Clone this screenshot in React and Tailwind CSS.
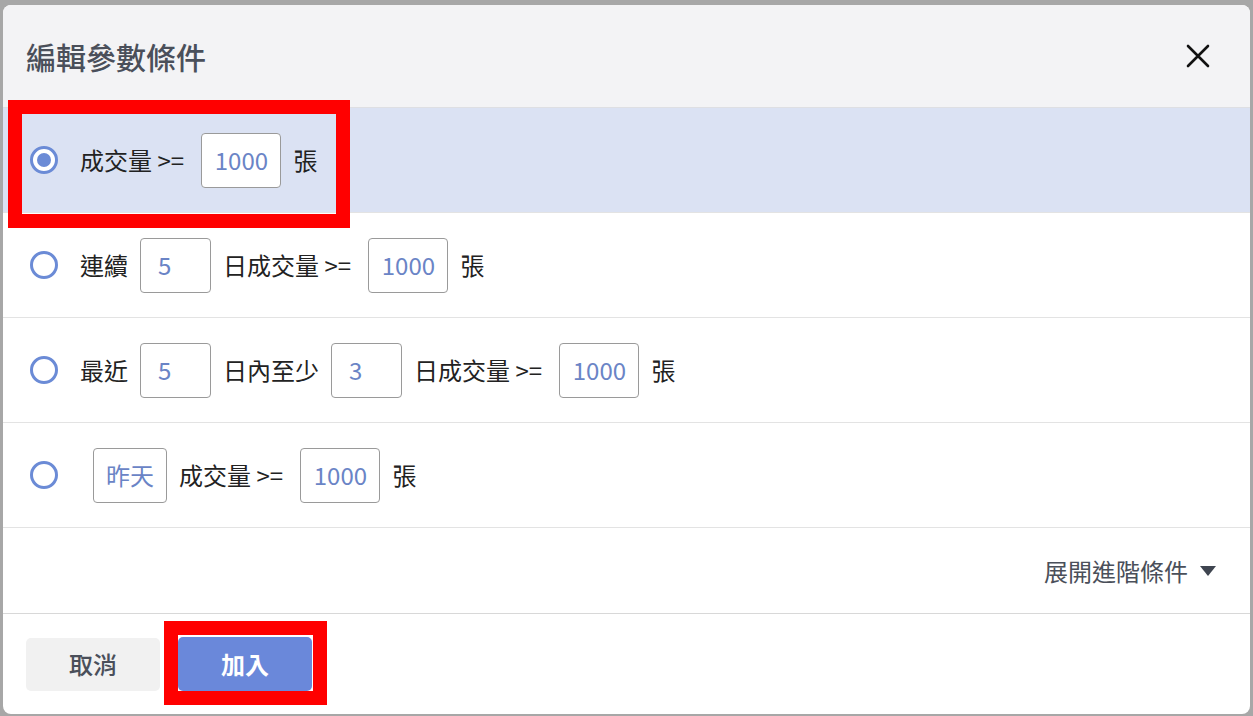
import React, { useState } from 'react';

const font = { fontFamily: '"Noto Sans CJK TC", "Noto Sans", sans-serif' };

const Radio = ({ checked }) => (
  <span className="w-[28px] h-[28px] rounded-full border-[3px] border-[#6b8bd6] flex items-center justify-center shrink-0 bg-white">
    {checked && <span className="w-[14px] h-[14px] rounded-full bg-[#6b8bd6]" />}
  </span>
);

const Box = ({ value, wide }) => (
  <span
    className={`${wide ? 'w-[80px] justify-center' : 'w-[71px] px-[17px]'} h-[55px] shrink-0 bg-white border border-[#9a9a9a] rounded-[4px] flex items-center text-[24px] text-[#6a84c6]`}
  >
    {value}
  </span>
);

const Label = ({ children }) => (
  <span className="text-[24px] text-[#222] whitespace-pre">{children}</span>
);

const App = () => {
  const [selected, setSelected] = useState(0);

  const rows = [
    [<Label key="a">成交量 &gt;= </Label>, <Box key="b" value="1000" wide />, <Label key="c">張</Label>],
    [
      <Label key="a">連續</Label>, <Box key="b" value="5" />,
      <Label key="c">日成交量 &gt;= </Label>, <Box key="d" value="1000" wide />, <Label key="e">張</Label>,
    ],
    [
      <Label key="a">最近</Label>, <Box key="b" value="5" />,
      <Label key="c">日內至少</Label>, <Box key="d" value="3" />,
      <Label key="e">日成交量 &gt;= </Label>, <Box key="f" value="1000" wide />, <Label key="g">張</Label>,
    ],
    [
      <span key="s" className="ml-[13px] w-[74px] h-[55px] shrink-0 bg-white border border-[#9a9a9a] rounded-[4px] flex items-center justify-center text-[24px] text-[#6a84c6]">昨天</span>,
      <Label key="a">成交量 &gt;= </Label>, <Box key="b" value="1000" wide />, <Label key="c">張</Label>,
    ],
  ];

  return (
    <div className="relative w-[1253px] h-[716px] bg-[#a7a7a7] pt-[5px] pl-[3px] overflow-hidden" style={font}>
      <div className="w-[1247px] h-[709px] bg-white rounded-[8px] overflow-hidden flex flex-col">
        <div className="h-[103px] shrink-0 bg-[#f3f3f5] border-b border-[#dedfe3] flex items-center justify-between pl-[23px] pr-[40px]">
          <span className="text-[30px] text-[#4a4f5a] font-medium">編輯參數條件</span>
          <svg width="24" height="24" viewBox="0 0 24 24" fill="none" stroke="#111" strokeWidth="2.6" strokeLinecap="round">
            <path d="M2 2 L22 22 M22 2 L2 22" />
          </svg>
        </div>

        {rows.map((items, i) => (
          <div
            key={i}
            onClick={() => setSelected(i)}
            className={`h-[105px] shrink-0 border-b border-[#e3e3e3] flex items-center pl-[27px] gap-[12px] ${
              selected === i ? 'bg-[#dbe2f3]' : 'bg-white'
            }`}
          >
            <span className="mr-[10px]"><Radio checked={selected === i} /></span>
            {items}
          </div>
        ))}

        <div className="h-[86px] shrink-0 border-b border-[#d8d8d8] flex items-center justify-end pr-[34px] gap-[12px]">
          <span className="text-[24px] text-[#4a4f5a]">展開進階條件</span>
          <svg width="16" height="10" viewBox="0 0 16 10"><path d="M0 0 H16 L8 10 Z" fill="#3f4550" /></svg>
        </div>

        <div className="flex-1 flex items-center pl-[23px] gap-[18px]">
          <button className="w-[134px] h-[53px] rounded-[5px] bg-[#f1f1f1] text-[24px] text-[#4a4f5a] font-medium">取消</button>
          <button className="w-[134px] h-[54px] rounded-[5px] bg-[#6a88da] text-[24px] text-white font-bold">加入</button>
        </div>
      </div>

      <div className="absolute left-[8px] top-[100px] w-[342px] h-[128px] border-[14px] border-[#ff0000] pointer-events-none" />
      <div className="absolute left-[164px] top-[621px] w-[163px] h-[84px] border-[14px] border-[#ff0000] pointer-events-none" />
    </div>
  );
};

export default App;
